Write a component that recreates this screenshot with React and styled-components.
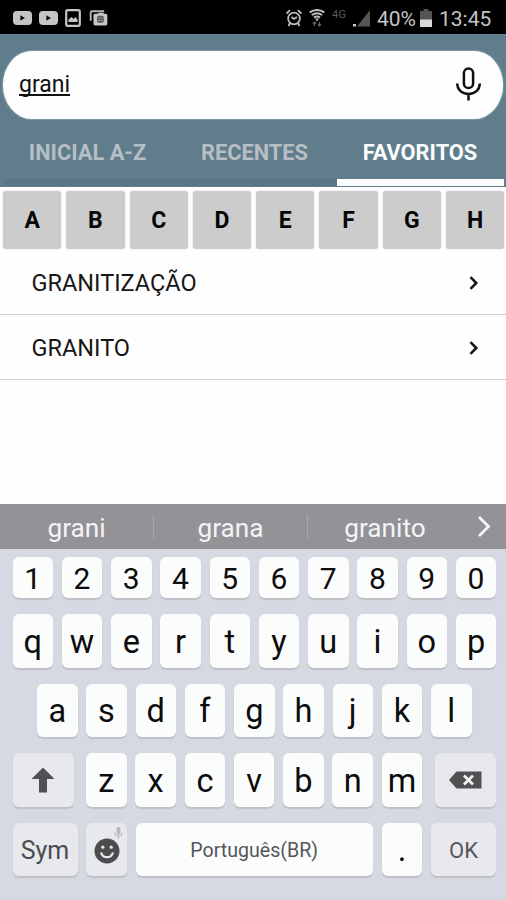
import React from 'react';
import styled, { createGlobalStyle } from 'styled-components';

const GlobalStyle = createGlobalStyle`
  * { box-sizing: border-box; }
  body { margin: 0; background: #fff; font-family: Roboto, "Liberation Sans", sans-serif; }
  button { font-family: inherit; margin: 0; padding: 0; border: 0; }
  svg { display: block; flex: none; }
`;

const Screen = styled.div`
  display: flex;
  flex-direction: column;
  width: 506px;
  height: 900px;
  overflow: hidden;
  background: #fefefe;
`;

const StatusBar = styled.div`
  display: flex;
  justify-content: space-between;
  height: 34px;
  padding: 2px 14px 0 13px;
  background: #000;
  color: #c4c4c4;
`;

const StatusGroup = styled.div`
  display: flex;
  align-items: center;
  gap: ${(p) => p.$gap}px;
`;

const StatusText = styled.span`
  width: ${(p) => p.$width}px;
  padding-top: 2px;
  font-size: 21px;
  line-height: 32px;
  white-space: nowrap;
`;

const Network = styled.span`
  width: 14px;
  height: 18px;
  font-size: 11px;
  line-height: 11px;
  letter-spacing: 0.3px;
  color: #5c5c5c;
`;

const Header = styled.header`
  display: flex;
  flex-direction: column;
  height: 153px;
  padding-top: 17px;
  background: #607d8b;
`;

const SearchBox = styled.div`
  display: flex;
  align-items: center;
  justify-content: space-between;
  height: 68px;
  margin: 0 3px;
  padding: 0 22px 2px 16px;
  border-radius: 29px / 34px;
  background: #fefefe;
  box-shadow: 0 0 2px #d5e2e7;
`;

const Query = styled.span`
  height: 29px;
  font-size: 23px;
  line-height: 30px;
  color: #111;
  text-decoration: underline;
  text-decoration-thickness: 1.5px;
  text-underline-offset: 2px;
  text-decoration-skip-ink: none;
`;

const Tabs = styled.nav`
  display: grid;
  grid-template-columns: 167px 167px 167px;
  height: 68px;
  padding-left: 3px;
`;

const Tab = styled.button`
  height: 67px;
  padding: 8px ${(p) => (p.$active ? 1 : 0)}px 0 ${(p) => (p.$active ? 0 : 2)}px;
  border-bottom: ${(p) => (p.$active ? '7px solid #fdfdfd' : '7px solid #587687')};
  background: transparent;
  color: ${(p) => (p.$active ? '#fafcfd' : '#b7bec4')};
  font-size: 21.8px;
  font-weight: 700;
  line-height: 26px;
  white-space: nowrap;
`;

const Letters = styled.div`
  display: grid;
  grid-template-columns: repeat(8, 58.3px);
  column-gap: 5px;
  height: 63px;
  padding: 4px 0 1px 3px;
`;

const Letter = styled.button`
  padding-top: 2px;
  border-radius: 3px;
  background: #cccccc;
  box-shadow: 0 0 2px #d8d8d8;
  color: #060606;
  font-size: 23px;
  font-weight: 700;
  line-height: 56px;
`;

const ResultRow = styled.div`
  display: flex;
  align-items: center;
  justify-content: space-between;
  height: 65px;
  padding: 1px 27.5px 0 31.5px;
  border-bottom: 1.5px solid #cecece;
  color: #161616;
  font-size: 23.5px;
`;

const Spacer = styled.div`
  flex: 1;
`;

const Suggestions = styled.div`
  display: grid;
  grid-template-columns: 154px 154px 154px 44px;
  align-items: center;
  height: 45px;
  background: #939297;
  color: #f4f4f6;
`;

const Suggestion = styled.span`
  height: 24px;
  border-right: ${(p) => (p.$last ? '0' : '1px solid #a9a8ad')};
  font-size: 26.2px;
  line-height: 26px;
  text-align: center;
`;

const Keyboard = styled.div`
  display: flex;
  flex-direction: column;
  gap: 16px;
  height: 351px;
  padding: 8px 10px 0 12.5px;
  background: #d6d8e2;
`;

const KeyRow = styled.div`
  display: flex;
  gap: 8.75px;
  height: ${(p) => p.$height || 53.6}px;
  padding-left: ${(p) => p.$indent || 0}px;
`;

const Key = styled.button`
  display: flex;
  align-items: center;
  justify-content: center;
  flex: none;
  width: ${(p) => p.$width || 40.5}px;
  padding-top: ${(p) => p.$drop || 0}px;
  border-radius: 6px;
  background: ${(p) => (p.$muted ? '#e8e9ed' : '#fbfcfc')};
  box-shadow: 0 1.5px 1px #bfc0c8;
  color: ${(p) => p.$color || '#0c0c0c'};
  font-size: ${(p) => p.$size || 32.5}px;
  line-height: 1;
`;

const EmojiKey = styled(Key)`
  position: relative;
`;

const MicBadge = styled.span`
  position: absolute;
  top: 4px;
  right: 4px;
`;

const VideoIcon = () => (
  <svg width="19" height="14" viewBox="0 0 19 14">
    <rect width="19" height="14" rx="4" fill="#c5c5c5" />
    <path d="M7.3 4.2 12 7l-4.700 2.800z" fill="#111" />
  </svg>
);

const PictureIcon = () => (
  <svg width="16" height="18" viewBox="0 0 16 18">
    <rect x="1.2" y="1.2" width="13.6" height="15.6" rx="1.5" fill="none" stroke="#c5c5c5" strokeWidth="2.2" />
    <path d="M3.5 13v-2.500l3-2.500 2 2 2-2 2 2.500V13z" fill="#c5c5c5" />
  </svg>
);

const CopiesIcon = () => (
  <svg width="20" height="16" viewBox="-1.500 0 18.500 15">
    <path d="M.9 10V2.300Q.9 1.100 2.100 1.100H13.500" fill="none" stroke="#b5b5b5" strokeWidth="1.800" />
    <path d="M5 3.500h2.500l1-1h4l1 1h1.500q1.500 0 1.500 1.500v8q0 1.500-1.500 1.500H5Q3.500 14.500 3.500 13V5q0-1.500 1.500-1.500z" fill="#c5c5c5" />
    <rect x="6.800" y="5.500" width="6.500" height="6.500" rx="2" fill="#555" />
    <path d="M7.300 7.500h5.500M7.300 9.800h5.500" stroke="#999" />
  </svg>
);

const AlarmIcon = () => (
  <svg width="16" height="18" viewBox="0 0 16 18" fill="none" stroke="#bcbcbc" strokeWidth="1.800">
    <circle cx="8" cy="9.500" r="5.900" />
    <path d="M.6 4.500 4 1.200M15.400 4.500 12 1.200M4 14l-1.500 3M12 14l1.500 3M5.500 8l2.500 2 3-2" />
  </svg>
);

const WifiIcon = () => (
  <svg width="16" height="18" viewBox="0 0 16 18" fill="none" stroke="#bcbcbc">
    <path d="M.7 3.300q7.300-4.600 14.600 0M2.800 6q5.200-3.400 10.400 0M4.900 8.500q3.100-2 6.200 0" strokeWidth="2" />
    <path d="M6 9.500h4L8 12.500z" fill="#bcbcbc" stroke="none" />
    <path d="M5.500 17v-4M3.800 14.700l1.700-1.700 1.700 1.700M10.500 13v4M8.800 15.300l1.700 1.700 1.700-1.700" stroke="#666" strokeWidth="1.200" />
  </svg>
);

const SignalIcon = () => (
  <svg width="17" height="18" viewBox="0 0 17 18">
    <path d="M17 1v16.500H4z" fill="#555" />
    <path d="M0 15h3v2.500H0z" fill="#c5c5c5" />
  </svg>
);

const BatteryIcon = () => (
  <svg width="12" height="18" viewBox="0 0 12 18">
    <path d="M3.500 0h5v2H12v9H0V2h3.500z" fill="#555" />
    <path d="M0 10.500h12V18H0z" fill="#d8d8d8" />
  </svg>
);

const MicIcon = () => (
  <svg width="25" height="34" viewBox="0 0 25 34" fill="none" stroke="#111" strokeWidth="2.500">
    <rect x="7.900" y="1.500" width="9.200" height="19.500" rx="4.600" />
    <path d="M1.200 16.500C1.200 23 6 27 12.500 27s11.300-4 11.300-10.500M12.500 27v6.500" />
  </svg>
);

const RowChevron = () => (
  <svg width="11" height="14" viewBox="0 0 11 14" fill="none" stroke="#151515" strokeWidth="2.500">
    <path d="m2.500 1.200 5.800 5.800-5.800 5.800" />
  </svg>
);

const MoreIcon = () => (
  <svg width="44" height="24" viewBox="0 0 44 24" fill="none" stroke="#f7f7f8" strokeWidth="2.800">
    <path d="m17 2 9.500 9.500L17 21" />
  </svg>
);

const ShiftIcon = () => (
  <svg width="24" height="26" viewBox="0 0 24 26">
    <path d="M12 .5 23.500 12H16v13.500H8V12H.5z" fill="#505153" />
  </svg>
);

const BackspaceIcon = () => (
  <svg width="33" height="18" viewBox="0 0 33 18">
    <path d="M0 9 7.500.5H32.500v17H7.500z" fill="#505153" />
    <path d="m15 4.500 9 9m0-9-9 9" stroke="#f0f0f2" strokeWidth="2.800" />
  </svg>
);

const SmileIcon = () => (
  <svg width="26" height="26" viewBox="0 0 26 26">
    <circle cx="13" cy="13" r="12.500" fill="#4b4c4e" />
    <circle cx="8.800" cy="9.200" r="1.600" fill="#e8e9ed" />
    <circle cx="17.200" cy="9.200" r="1.600" fill="#e8e9ed" />
    <path d="M7 14.500q1.500 4.700 6 4.700t6-4.700" fill="none" stroke="#e8e9ed" strokeWidth="2.300" />
  </svg>
);

const TinyMicIcon = () => (
  <svg width="9" height="12" viewBox="0 0 9 12" fill="none" stroke="#b8b9bd" strokeWidth="1.200">
    <rect x="3.200" y=".5" width="2.600" height="6.500" rx="1.300" fill="#b8b9bd" />
    <path d="M.8 5.500q0 3.500 3.700 3.500t3.700-3.500M4.500 9v3" />
  </svg>
);

const tabs = [
  { label: 'INICIAL A-Z' },
  { label: 'RECENTES' },
  { label: 'FAVORITOS', active: true },
];

export default function App() {
  return (
    <>
      <GlobalStyle />
      <Screen>
        <StatusBar>
          <StatusGroup $gap={7}>
            <VideoIcon />
            <VideoIcon />
            <PictureIcon />
            <CopiesIcon />
          </StatusGroup>
          <StatusGroup $gap={7}>
            <AlarmIcon />
            <WifiIcon />
            <Network>4G</Network>
            <SignalIcon />
            <StatusText $width={36}>40%</StatusText>
            <BatteryIcon />
            <StatusText $width={53}>13:45</StatusText>
          </StatusGroup>
        </StatusBar>
        <Header>
          <SearchBox>
            <Query>grani</Query>
            <MicIcon />
          </SearchBox>
          <Tabs>
            {tabs.map((t) => (
              <Tab key={t.label} $active={t.active}>{t.label}</Tab>
            ))}
          </Tabs>
        </Header>
        <Letters>
          {[...'ABCDEFGH'].map((l) => <Letter key={l}>{l}</Letter>)}
        </Letters>
        {['GRANITIZAÇÃO', 'GRANITO'].map((word) => (
          <ResultRow key={word}>
            <span>{word}</span>
            <RowChevron />
          </ResultRow>
        ))}
        <Spacer />
        <Suggestions>
          <Suggestion>grani</Suggestion>
          <Suggestion>grana</Suggestion>
          <Suggestion $last>granito</Suggestion>
          <MoreIcon />
        </Suggestions>
        <Keyboard>
          <KeyRow $height={41}>
            {[...'1234567890'].map((k) => <Key key={k} $size={30} $drop={2}>{k}</Key>)}
          </KeyRow>
          <KeyRow>
            {[...'qwertyuiop'].map((k) => <Key key={k} $drop={2}>{k}</Key>)}
          </KeyRow>
          <KeyRow $indent={24.5}>
            {[...'asdfghjkl'].map((k) => <Key key={k} $drop={1}>{k}</Key>)}
          </KeyRow>
          <KeyRow>
            <Key $muted $width={61}><ShiftIcon /></Key>
            <KeyRow $indent={3.9}>
              {[...'zxcvbnm'].map((k) => <Key key={k} $drop={2}>{k}</Key>)}
            </KeyRow>
            <KeyRow $indent={4}>
              <Key $muted $width={61}><BackspaceIcon /></Key>
            </KeyRow>
          </KeyRow>
          <KeyRow>
            <Key $muted $width={65} $size={25} $drop={1} $color="#4b4c50">Sym</Key>
            <EmojiKey $muted $drop={2}>
              <SmileIcon />
              <MicBadge><TinyMicIcon /></MicBadge>
            </EmojiKey>
            <Key $width={237.5} $size={19.6} $drop={2} $color="#555659">Português(BR)</Key>
            <Key $drop={1}>.</Key>
            <Key $muted $width={65} $size={22} $drop={2} $color="#55565a">OK</Key>
          </KeyRow>
        </Keyboard>
      </Screen>
    </>
  );
}
